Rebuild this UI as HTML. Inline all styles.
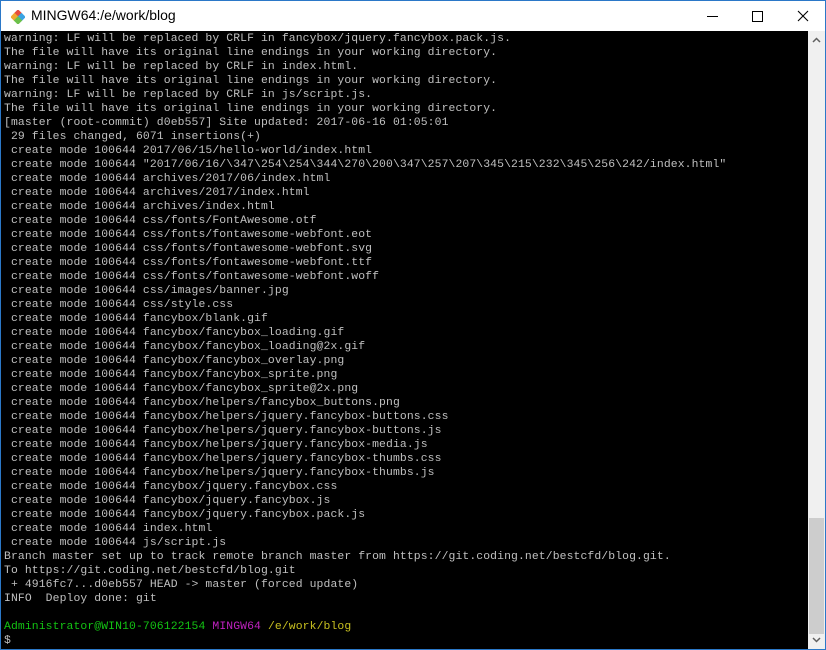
<!DOCTYPE html>
<html><head><meta charset="utf-8"><style>
html,body{margin:0;padding:0;width:826px;height:650px;overflow:hidden;background:#fff}
.win{position:absolute;left:0;top:0;width:824px;height:648px;border:1px solid #2b78c8;background:#fff}
.title{position:absolute;left:0;top:0;width:824px;height:30px;background:#fff}
.title .t{position:absolute;left:30px;top:6px;font:14px "Liberation Sans",sans-serif;color:#000}
.icon{position:absolute;left:10px;top:9px;width:14px;height:14px}
.term{position:absolute;left:0;top:30px;width:807px;height:618px;background:#000;overflow:hidden}
pre{margin:0;padding:0 0 0 3px;font:11.4px/14px "Liberation Mono",monospace;letter-spacing:0.11px;color:#c0c0c0;position:relative;top:1px}
.g{color:#13c413}.m{color:#c022c0}.y{color:#c8c020}
.sb{position:absolute;left:807px;top:30px;width:17px;height:618px;background:#f0f0f0}
.thumb{position:absolute;left:1px;top:487px;width:15px;height:116px;background:#cdcdcd}
</style></head><body>
<div class="win">
<div class="title">
<svg class="icon" viewBox="0 0 14 14"><rect x="4" y="0.5" width="6" height="6" transform="rotate(45 7 3.5)" fill="#e74c3c"/><rect x="0.5" y="4" width="6" height="6" transform="rotate(45 3.5 7)" fill="#f0a830"/><rect x="7.5" y="4" width="6" height="6" transform="rotate(45 10.5 7)" fill="#3aa3e3"/><rect x="4" y="7.5" width="6" height="6" transform="rotate(45 7 10.5)" fill="#6cc04a"/></svg>
<div class="t">MINGW64:/e/work/blog</div>
<div style="position:absolute;left:706px;top:15px;width:11px;height:1px;background:#000"></div>
<div style="position:absolute;left:751px;top:10px;width:9px;height:9px;border:1px solid #000"></div>
<svg style="position:absolute;left:796px;top:9px" width="12" height="12" viewBox="0 0 12 12"><path d="M1 1L11 11M11 1L1 11" stroke="#000" stroke-width="1.1"/></svg>
</div>
<div class="term"><pre>warning: LF will be replaced by CRLF in fancybox/jquery.fancybox.pack.js.
The file will have its original line endings in your working directory.
warning: LF will be replaced by CRLF in index.html.
The file will have its original line endings in your working directory.
warning: LF will be replaced by CRLF in js/script.js.
The file will have its original line endings in your working directory.
[master (root-commit) d0eb557] Site updated: 2017-06-16 01:05:01
 29 files changed, 6071 insertions(+)
 create mode 100644 2017/06/15/hello-world/index.html
 create mode 100644 "2017/06/16/\347\254\254\344\270\200\347\257\207\345\215\232\345\256\242/index.html"
 create mode 100644 archives/2017/06/index.html
 create mode 100644 archives/2017/index.html
 create mode 100644 archives/index.html
 create mode 100644 css/fonts/FontAwesome.otf
 create mode 100644 css/fonts/fontawesome-webfont.eot
 create mode 100644 css/fonts/fontawesome-webfont.svg
 create mode 100644 css/fonts/fontawesome-webfont.ttf
 create mode 100644 css/fonts/fontawesome-webfont.woff
 create mode 100644 css/images/banner.jpg
 create mode 100644 css/style.css
 create mode 100644 fancybox/blank.gif
 create mode 100644 fancybox/fancybox_loading.gif
 create mode 100644 fancybox/fancybox_loading@2x.gif
 create mode 100644 fancybox/fancybox_overlay.png
 create mode 100644 fancybox/fancybox_sprite.png
 create mode 100644 fancybox/fancybox_sprite@2x.png
 create mode 100644 fancybox/helpers/fancybox_buttons.png
 create mode 100644 fancybox/helpers/jquery.fancybox-buttons.css
 create mode 100644 fancybox/helpers/jquery.fancybox-buttons.js
 create mode 100644 fancybox/helpers/jquery.fancybox-media.js
 create mode 100644 fancybox/helpers/jquery.fancybox-thumbs.css
 create mode 100644 fancybox/helpers/jquery.fancybox-thumbs.js
 create mode 100644 fancybox/jquery.fancybox.css
 create mode 100644 fancybox/jquery.fancybox.js
 create mode 100644 fancybox/jquery.fancybox.pack.js
 create mode 100644 index.html
 create mode 100644 js/script.js
Branch master set up to track remote branch master from https://git.coding.net/bestcfd/blog.git.
To https://git.coding.net/bestcfd/blog.git
 + 4916fc7...d0eb557 HEAD -&gt; master (forced update)
INFO  Deploy done: git

<span class="g">Administrator@WIN10-706122154</span> <span class="m">MINGW64</span> <span class="y">/e/work/blog</span>
$</pre></div>
<div class="sb">
<svg style="position:absolute;left:4px;top:6px" width="9" height="6" viewBox="0 0 9 6"><path d="M1 5L4.5 1.5L8 5" stroke="#606060" stroke-width="1.5" fill="none"/></svg>
<div class="thumb"></div>
<svg style="position:absolute;left:4px;top:606px" width="9" height="6" viewBox="0 0 9 6"><path d="M1 1L4.5 4.5L8 1" stroke="#606060" stroke-width="1.5" fill="none"/></svg>
</div>
</div>
</body></html>
